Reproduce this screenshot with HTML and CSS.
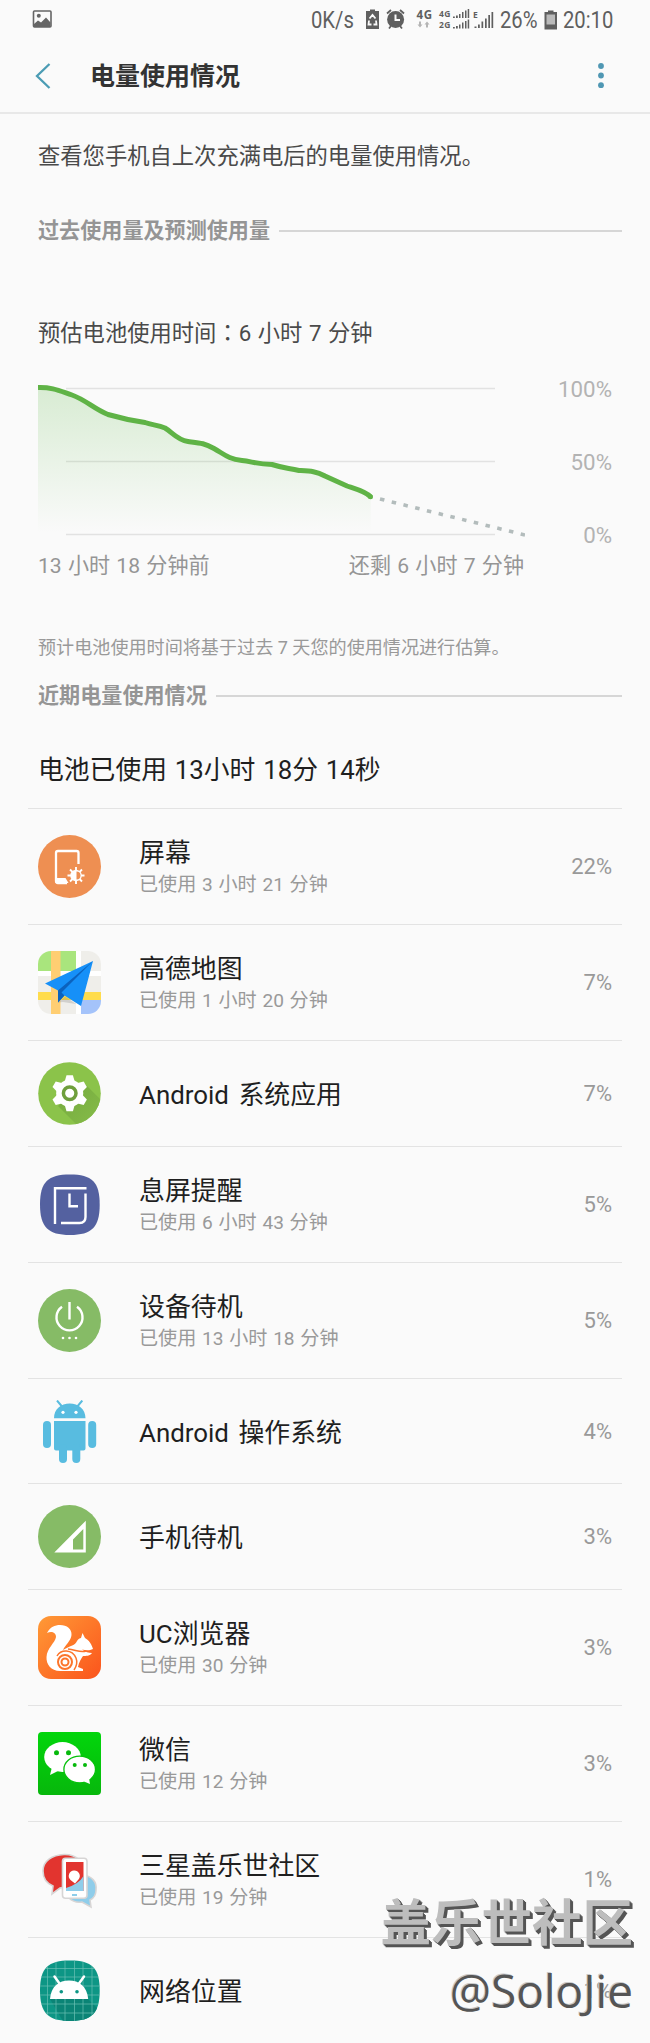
FILE: index.html
```html
<!DOCTYPE html>
<html lang="zh-CN">
<head>
<meta charset="utf-8">
<title>电量使用情况</title>
<link rel="stylesheet" href="styles.css">
</head>
<body>

<div class="status">
<svg class="pic" width="20" height="20" viewBox="0 0 20 20"><rect x="1.500" y="1" width="17.500" height="16" rx="1" fill="none" stroke="#656565" stroke-width="1.600"/><circle cx="6.800" cy="5.700" r="2" fill="#656565"/><path d="M2 14l4-3.500 3 2 5-5 4.500 5V17H2z" fill="#656565"/></svg>
<span class="speed"><span class="narrow">0K/s</span></span>
<svg class="signals" width="138" height="40" viewBox="362 0 138 40" fill="#5f5f5f">
<path d="M366 11h4V9.500h5V11h4v18h-13z"/>
<path d="M369.500 18.500l3-3.500 3 3.500M369 20.500l-.5 4h3M376 20.500l.5 4h-3" fill="none" stroke="#fafafa" stroke-width="1.800"/>
<circle cx="395.600" cy="19.500" r="8.500"/>
<path d="M387 13.500l4-3.500M404 13.500l-4-3.500M389 28.500l2-2.500M402 28.500l-2-2.500" stroke="#5f5f5f" stroke-width="1.800"/>
<path d="M395.500 14.500v5.500h4.500" fill="none" stroke="#fafafa" stroke-width="2"/>
<text x="416.500" y="19" font-size="11.500" textLength="15.500">4G</text>
<path d="M419 21.500h2v3h1.500l-2.500 3-2.500-3h1.500zM426 27.500h2v-3h1.500l-2.500-3-2.500 3h1.500z" fill="#b5b5b5"/>
<text x="439" y="17" font-size="8.500" textLength="11.500">4G</text>
<text x="439" y="28" font-size="8.500" textLength="11.500">2G</text>
<path d="M453 16.500h1.800v1.500H453zM456 15.500h1.800V18H456zM459 14h1.500v4H459zM462 12h1.500v6H462zM465 10.500h1.500V18H465zM467.700 9h1.500v9h-1.500z"/>
<path d="M453 27h1.800v1.500H453zM456 26h1.800v2.500H456zM459 24.500h1.500v4H459zM462 22.500h1.500v6H462zM465 21h1.500v7.500H465zM467.700 19.500h1.500v9h-1.500z"/>
<text x="473" y="17.500" font-size="8.500">E</text>
<path d="M474.500 26.500h2v1.500h-2zM478 24.500h1.800V28H478zM481.500 21.500h1.700V28h-1.700zM485 18.500h1.700V28H485zM488.300 15h1.700v13h-1.700zM491.500 12h1.700v16h-1.700z"/>
</svg>
<span class="percent"><span class="narrow">26%</span></span>
<svg class="batt" width="14" height="20" viewBox="0 0 14 20"><path d="M.5 2H4V.5h5.500V2H13v17.500H.5z" fill="#5f5f5f"/><path d="M2.500 4.500h8.500v10H2.500z" fill="#bababa"/></svg>
<span class="clock"><span class="narrow">20:10</span></span>
</div>

<div class="header">
<svg class="back" width="16" height="26" viewBox="0 0 16 26"><path d="M14.500 1L2 13l12.500 12" fill="none" stroke="#4b9cb4" stroke-width="2.300"/></svg>
<h1>电量使用情况</h1>
<svg class="more" width="8" height="28" viewBox="0 0 8 28" fill="#4f97b3"><circle cx="4" cy="4" r="2.900"/><circle cx="4" cy="13.500" r="2.900"/><circle cx="4" cy="23.200" r="2.900"/></svg>
</div>

<p class="intro">查看您手机自上次充满电后的电量使用情况。</p>
<h2 class="first">过去使用量及预测使用量</h2>

<p class="estimate">预估电池使用时间<span class="colon" lang="zh-TW">：</span>6 小时 7 分钟</p>
<div class="chart">
<svg width="487" height="180" viewBox="38 370 487 180">
<defs>
<linearGradient id="fade" x1="0" y1="0" x2="0" y2="1"><stop offset="0" stop-color="#5fb948" stop-opacity=".22"/><stop offset="1" stop-color="#5fb948" stop-opacity="0"/></linearGradient>
</defs>
<path d="M66 388.500H495M66 461.500H495M66 534.500H495" stroke="#e2e2e2" stroke-width="1.500"/>
<path d="M38 387.500C52 387 60 391 72 395C86 400 94 409 108 414.500C120 418 128 420 145 422.500C152 425 158 425 165 428C172 432 177 440 188 441.500C200 443 204 443 214 448.500C224 454 228 459 242 460.500C252 461.500 256 464 272 464.500C283 468 288 468 299 470.500C310 471 316 471 325 476L347 486C356 489 367 492 370.700 497V533H38z" fill="url(#fade)"/>
<path d="M38 387.500C52 387 60 391 72 395C86 400 94 409 108 414.500C120 418 128 420 145 422.500C152 425 158 425 165 428C172 432 177 440 188 441.500C200 443 204 443 214 448.500C224 454 228 459 242 460.500C252 461.500 256 464 272 464.500C283 468 288 468 299 470.500C310 471 316 471 325 476L347 486C356 489 367 492 370.700 497" fill="none" stroke="#5fb346" stroke-width="5"/>
<circle cx="370.500" cy="496.700" r="2.500" fill="#5fb346"/>
<path d="M380 499L525 535" stroke="#b3bcbc" stroke-width="3.600" stroke-dasharray="4.500 7.580"/>
</svg>
<div class="scale"><span>100%</span><span>50%</span><span>0%</span></div>
</div>
<div class="range"><span>13 小时 18 分钟前</span><span>还剩 6 小时 7 分钟</span></div>

<p class="note">预计电池使用时间将基于过去 7 天您的使用情况进行估算。</p>
<h2>近期电量使用情况</h2>
<p class="total">电池已使用 13小时 18分 14秒</p>

<ul class="apps">
<li class="tall">
<svg viewBox="0 0 63 63"><circle cx="31.500" cy="31.500" r="31.500" fill="#ee8f52"/><path d="M40.500 29V18q0-2-2-2H20q-2 0-2 2v28q0 2 2 2h9" fill="none" stroke="#fff" stroke-width="2.300"/><path d="M17 43h10.500l3 5H19q-2 0-2-2z" fill="#fff"/><path d="M38 32v17M29.500 40.500h17M32 34.500l12 12M44 34.500l-12 12" stroke="#fff" stroke-width="1.900"/><circle cx="38" cy="40.500" r="5.800" fill="#fff"/><path d="M38.500 36.500a4 4 0 0 1 0 8z" fill="#ee8f52"/></svg>
<div class="name"><b>屏幕</b><small>已使用 3 小时 21 分钟</small></div><span>22%</span></li>
<li class="tall">
<svg viewBox="0 0 63 63"><defs><clipPath id="map"><rect width="63" height="63" rx="13"/></clipPath></defs><g clip-path="url(#map)"><path d="M0 0h63v63H0z" fill="#fff"/><path d="M0 25h38v38H0zM43 0h20v20H43zM43 25h20v17H43z" fill="#efeeea"/><path d="M0 0h38v20H0z" fill="#a9e57d"/><path d="M43 49h20v14H43z" fill="#a4c3fa"/><path d="M0 41h63v8H0z" fill="#ffdc4d"/><path d="M13 0h9.500v63H13z" fill="#ffce72"/></g><path d="M20 51.500l7-6L38 53l-13-2z" fill="#777" opacity=".25"/><path d="M55 10L7 32.500 20 39.500V51.500l6.500-7L43 55z" fill="#1690f8"/><path d="M55 10L20 39.500V51.500l6.500-7-3-3z" fill="#0b62be"/></svg>
<div class="name"><b>高德地图</b><small>已使用 1 小时 20 分钟</small></div><span>7%</span></li>
<li>
<svg viewBox="0 0 63 63"><defs><clipPath id="round"><circle cx="31.500" cy="31.500" r="31.300"/></clipPath><linearGradient id="shade" x1="0" y1="0" x2="1" y2="1"><stop offset="0" stop-color="#74a93e"/><stop offset=".8" stop-color="#85bb48"/></linearGradient></defs><circle cx="31.500" cy="31.500" r="31.300" fill="#8bc34a"/><path d="M46 21l25 25v25H47L20 44z" fill="url(#shade)" clip-path="url(#round)"/><g fill="#fff"><circle cx="31.700" cy="31.300" r="13.500"/><path id="cog" d="M28.500 13.300h6.400l2 7v22l-2 7h-6.400l-2-7v-22z"/><use href="#cog" transform="rotate(60 31.700 31.300)"/><use href="#cog" transform="rotate(120 31.700 31.300)"/></g><circle cx="31.700" cy="31.300" r="6.300" fill="none" stroke="#6f9f3c" stroke-width="3.500"/></svg>
<div class="name"><b>Android 系统应用</b></div><span>7%</span></li>
<li class="tall">
<svg viewBox="0 0 63 63"><path d="M32 1.500C54 1.500 61.700 9 61.700 31.500S54 62 32 62 2 54 2 31.500 10 1.500 32 1.500z" fill="#5461a0"/><path d="M17 51V15.200H48.500M47.500 20.500V44q0 6-6 6H23M31.500 20.500v12.800h8.500" fill="none" stroke="#fff" stroke-width="2.400"/></svg>
<div class="name"><b>息屏提醒</b><small>已使用 6 小时 43 分钟</small></div><span>5%</span></li>
<li class="tall">
<svg viewBox="0 0 63 63"><circle cx="31.500" cy="31.500" r="31.500" fill="#86bb66"/><path d="M24 17.800a13 13 0 1 0 15 0M31.500 13v17.500" fill="none" stroke="#fff" stroke-width="2.400"/><circle cx="25" cy="49" r="1.300" fill="#fff"/><circle cx="31.500" cy="49" r="1.300" fill="#fff"/><circle cx="38" cy="49" r="1.300" fill="#fff"/></svg>
<div class="name"><b>设备待机</b><small>已使用 13 小时 18 分钟</small></div><span>5%</span></li>
<li>
<svg viewBox="0 0 63 63" fill="#58bce0"><path d="M16 18.300C16 9 23 3.500 31.700 3.500S47.500 9 47.500 18.300zM16 21h31.500v27.500q0 2-2 2H18q-2 0-2-2z"/><rect x="5" y="21" width="8" height="27" rx="4"/><rect x="50.200" y="21" width="8" height="27" rx="4"/><rect x="21" y="44" width="8" height="19" rx="4"/><rect x="34.300" y="44" width="8" height="19" rx="4"/><path d="M19 .5l5 6M44.300 .5l-5 6" stroke="#58bce0" stroke-width="2"/><circle cx="25" cy="12.300" r="1.600" fill="#fff"/><circle cx="38" cy="12.300" r="1.600" fill="#fff"/></svg>
<div class="name"><b>Android 操作系统</b></div><span>4%</span></li>
<li>
<svg viewBox="0 0 63 63"><circle cx="31.500" cy="31.500" r="31.500" fill="#86bb66"/><path d="M16.300 47.500H47.800V15.700zM35 34.500L45.300 24v20.500H35z" fill="#fff" fill-rule="evenodd"/></svg>
<div class="name"><b>手机待机</b></div><span>3%</span></li>
<li class="tall">
<svg viewBox="0 0 63 63"><defs><linearGradient id="uc" x1="0" y1="0" x2="1" y2="1"><stop offset="0" stop-color="#ff9a36"/><stop offset="1" stop-color="#fb541c"/></linearGradient></defs><rect width="63" height="63" rx="13" fill="url(#uc)"/><path d="M9 17C12 11 17 9 22 9C29 9 34 13 33.500 19C33 25 27 29 25 34C33 29 37 30 39 25C40 23 42 22 43 22L44.500 17L47 22C51 24 54 29 55 33C51 35 47 34 44 33.500C47 36 51 37 54 37C52 40 48 40 45 40C43 43 41 46 40 51L45 53V55H22C13 55 8 48 8.500 41C9 32 17 27 18 21C18 16 13 15 9 17z" fill="#fff"/><path d="M19 40C23 33 34 33 38 42C40 47 38 51 36 54M30 33C38 34 43 37 48 35" fill="none" stroke="#fc752b" stroke-width="1.500"/><circle cx="27" cy="46" r="7" fill="#fff" stroke="#fc752b" stroke-width="2"/><circle cx="27" cy="46" r="3.500" fill="none" stroke="#fc752b" stroke-width="2"/></svg>
<div class="name"><b>UC浏览器</b><small>已使用 30 分钟</small></div><span>3%</span></li>
<li class="tall">
<svg viewBox="0 0 63 63"><defs><linearGradient id="wx" x1="0" y1="0" x2="0" y2="1"><stop offset="0" stop-color="#02d60c"/><stop offset="1" stop-color="#07b70c"/></linearGradient></defs><rect width="63" height="63" rx="4" fill="url(#wx)"/><ellipse cx="24.500" cy="25" rx="18.300" ry="15" fill="#fff"/><path d="M14 35l-2 8 8-4z" fill="#fff"/><ellipse cx="41.700" cy="37.500" rx="15.800" ry="13.300" fill="#fff" stroke="#06c20b" stroke-width="1.300"/><path d="M46 49.500l6 2.500-1-6z" fill="#fff"/><g fill="#07b90c"><circle cx="18.500" cy="20.700" r="2.500"/><circle cx="30.500" cy="20.700" r="2.500"/><circle cx="36.700" cy="33" r="2"/><circle cx="47" cy="33" r="2"/></g></svg>
<div class="name"><b>微信</b><small>已使用 12 分钟</small></div><span>3%</span></li>
<li class="tall">
<svg viewBox="0 0 63 63"><g stroke="#d7d5d5" stroke-width="1.600"><path d="M45 27C54 28 59 34 58 42C58 46 56 50 52 52L53 59L44 54C38 55 34 53 31 50z" fill="#8fcdea"/><path d="M26 6.500C38 6 46 14 46 23C46 33 38 39 27 39L22 40L14 46L15 38C8 35 5 30 5 23C5 13 14 7 26 6.500z" fill="#e2342f"/><rect x="24.500" y="10.300" width="24.500" height="40" rx="3" fill="#fff"/></g><path d="M28 14h17.500v29H28z" fill="#e2342f"/><path d="M28 40q13-4 17.500-12v15H28z" fill="#8fcdea"/><path d="M36 22.500a5.500 5.500 0 0 1 4.500 9l-3.500 4-4.500-3.500a5.500 5.500 0 0 1 3.500-9.500z" fill="#fff"/><path d="M34 47h5" stroke="#8fcdea" stroke-width="2"/></svg>
<div class="name"><b>三星盖乐世社区</b><small>已使用 19 分钟</small></div><span>1%</span></li>
<li>
<svg viewBox="0 0 63 63"><defs><clipPath id="squircle"><path d="M32 1.500C54 1.500 61.700 9 61.700 31.500S54 62 32 62 2 54 2 31.500 10 1.500 32 1.500z"/></clipPath></defs><g clip-path="url(#squircle)"><path d="M0 0h63v63H0z" fill="#0d9685"/><path d="M50 40l14 14v10H26L12 40z" fill="#0b8476"/><path d="M9.500 0v63M18 0v63M27 0v63M36.500 0v63M45 0v63M54 0v63M0 9.500h63M0 18h63M0 27h63M0 36h63M0 45h63M0 54h63" stroke="#6cc0b5" stroke-width=".7"/></g><path d="M12 40C13 27 21 21.500 31 21.500S49 27 50.200 40z" fill="#fff"/><path d="M16.500 17.500l5 7M46 17.500l-5 7" stroke="#fff" stroke-width="2.500" stroke-linecap="round"/><circle cx="23.300" cy="32.700" r="1.800" fill="#0d9685"/><circle cx="39" cy="32.700" r="1.800" fill="#0d9685"/></svg>
<div class="name"><b>网络位置</b></div><span>1%</span></li>
</ul>

<div class="watermark"><p class="site">盖乐世社区</p><p class="user">@SoloJie</p></div>

</body>
</html>
```
FILE: styles.css
```css
body{
margin: 0;
width: 650px;
height: 2043px;
position: relative;
overflow: hidden;
background-color: #fafafa;
color: #4a4a4a;
font-family: Roboto, "Noto Sans CJK SC", sans-serif;
}
h1, h2, p, ul{
margin: 0;
padding: 0;
}
svg{
display: block;
flex: none;
}
.status{
display: flex;
align-items: center;
height: 40px;
padding-left: 32px;
font-size: 23.5px;
line-height: 40px;
color: #5f5f5f;
}
.status text{
font-family: "Open Sans", sans-serif;
font-weight: bold;
}
.narrow{
display: inline-block;
transform: scaleX(0.86);
transform-origin: left;
}
.pic{
margin-right: 259px;
}
.speed{
width: 51px;
}
.percent{
width: 44px;
}
.clock{
margin-left: 5px;
}
.header{
display: flex;
align-items: center;
height: 72px;
padding: 0 45px 0 35px;
border-bottom: 2px solid #e8e8e8;
}
h1{
flex: 1;
margin-left: 39px;
padding-top: 2px;
font-size: 25px;
font-weight: bold;
line-height: 70px;
color: #333;
}
.intro{
padding-left: 38px;
font-size: 22.3px;
line-height: 84px;
}
h2{
display: flex;
align-items: center;
padding: 0 28px 0 38px;
font-size: 21.1px;
font-weight: bold;
line-height: 64px;
color: #959595;
}
h2::after{
content: "";
flex: 1;
height: 2px;
margin-left: 9px;
background-color: #d6d6d6;
}
.first{
line-height: 66px;
}
.estimate{
margin: 32px 0 0 38px;
font-size: 22.3px;
line-height: 74px;
word-spacing: 1px;
}
.colon{
font-family: "Noto Sans CJK TC", sans-serif;
line-height: 1;
}
.chart{
display: flex;
margin-left: 38px;
height: 180px;
}
.scale{
display: flex;
flex-direction: column;
width: 87px;
padding-top: 3px;
text-align: right;
font-size: 22.3px;
line-height: 33px;
gap: 40px;
color: #b3b3b3;
}
.range{
display: flex;
justify-content: space-between;
width: 486px;
margin-left: 38px;
font-size: 21.1px;
line-height: 32px;
word-spacing: 1px;
color: #959595;
}
.note{
margin: 50px 0 0 38px;
font-size: 18.1px;
line-height: 32px;
color: #999;
}
.total{
margin: 4px 0 0 38px;
font-size: 25.8px;
line-height: 76px;
word-spacing: 1.4px;
color: #1f1f1f;
}
.apps{
margin: 0 28px;
list-style: none;
}
.apps li{
display: flex;
align-items: center;
box-sizing: border-box;
height: 105.3px;
padding: 0 10px;
border-top: 1px solid #e3e3e3;
}
.apps .tall{
height: 116.2px;
}
.apps svg{
width: 63px;
height: 63px;
}
.name{
flex: 1;
margin-left: 38px;
padding-top: 3px;
word-spacing: 1px;
}
.name b{
display: block;
font-size: 25.9px;
font-weight: normal;
line-height: 34px;
word-spacing: 3px;
color: #1f1f1f;
}
.name small{
display: block;
font-size: 19.1px;
line-height: 30px;
color: #999;
}
.apps span{
font-size: 22px;
color: #999;
}
/* credit stamped over the last rows */
.watermark{
position: absolute;
right: 17px;
top: 1889px;
text-align: right;
color: #bdbdbd;
}
.site{
font-size: 50.5px;
font-weight: bold;
line-height: 70px;
text-shadow: 1px 1px #555, 2px 2px #555, 3px 3px #555;
}
.user{
font-family: "Open Sans", sans-serif;
font-size: 46px;
font-weight: 400;
line-height: 62px;
color: #555;
text-shadow: -1px -1px #c8c8c8;
}
```
